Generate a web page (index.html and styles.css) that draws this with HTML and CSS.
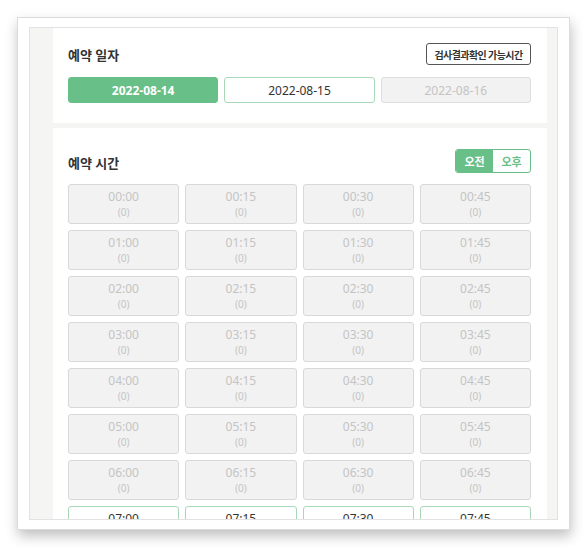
FILE: index.html
```html
<!DOCTYPE html>
<html lang="ko">
<head>
    <meta charset="UTF-8">
    <title>예약</title>
    <link rel="stylesheet" href="styles.css">
</head>
<body>
    <div class="frame">
        <div class="shot">
            <div class="card card-date">
                <div class="card-head">
                    <h3>예약 일자</h3>
                    <button class="btn-outline">검사결과확인 가능시간</button>
                </div>
                <div class="dates">
                    <button class="date active">2022-08-14</button>
                    <button class="date open">2022-08-15</button>
                    <button class="date closed">2022-08-16</button>
                </div>
            </div>

            <div class="card card-time">
                <div class="card-head">
                    <h3>예약 시간</h3>
                    <div class="toggle">
                        <button class="on">오전</button>
                        <button>오후</button>
                    </div>
                </div>
                <div class="times">
                    <!-- 00시 ~ 06시 : 마감 -->
                    <div class="slot off"><b>00:00</b><span>(0)</span></div>
                    <div class="slot off"><b>00:15</b><span>(0)</span></div>
                    <div class="slot off"><b>00:30</b><span>(0)</span></div>
                    <div class="slot off"><b>00:45</b><span>(0)</span></div>
                    <div class="slot off"><b>01:00</b><span>(0)</span></div>
                    <div class="slot off"><b>01:15</b><span>(0)</span></div>
                    <div class="slot off"><b>01:30</b><span>(0)</span></div>
                    <div class="slot off"><b>01:45</b><span>(0)</span></div>
                    <div class="slot off"><b>02:00</b><span>(0)</span></div>
                    <div class="slot off"><b>02:15</b><span>(0)</span></div>
                    <div class="slot off"><b>02:30</b><span>(0)</span></div>
                    <div class="slot off"><b>02:45</b><span>(0)</span></div>
                    <div class="slot off"><b>03:00</b><span>(0)</span></div>
                    <div class="slot off"><b>03:15</b><span>(0)</span></div>
                    <div class="slot off"><b>03:30</b><span>(0)</span></div>
                    <div class="slot off"><b>03:45</b><span>(0)</span></div>
                    <div class="slot off"><b>04:00</b><span>(0)</span></div>
                    <div class="slot off"><b>04:15</b><span>(0)</span></div>
                    <div class="slot off"><b>04:30</b><span>(0)</span></div>
                    <div class="slot off"><b>04:45</b><span>(0)</span></div>
                    <div class="slot off"><b>05:00</b><span>(0)</span></div>
                    <div class="slot off"><b>05:15</b><span>(0)</span></div>
                    <div class="slot off"><b>05:30</b><span>(0)</span></div>
                    <div class="slot off"><b>05:45</b><span>(0)</span></div>
                    <div class="slot off"><b>06:00</b><span>(0)</span></div>
                    <div class="slot off"><b>06:15</b><span>(0)</span></div>
                    <div class="slot off"><b>06:30</b><span>(0)</span></div>
                    <div class="slot off"><b>06:45</b><span>(0)</span></div>
                    <!-- 07시부터 예약 가능 -->
                    <div class="slot"><b>07:00</b><span>(0)</span></div>
                    <div class="slot"><b>07:15</b><span>(0)</span></div>
                    <div class="slot"><b>07:30</b><span>(0)</span></div>
                    <div class="slot"><b>07:45</b><span>(0)</span></div>
                </div>
            </div>
        </div>
    </div>
</body>
</html>
```

FILE: styles.css
```css
* {
    box-sizing: border-box;
    margin: 0;
    padding: 0;
}

body {
    background: #fff;
    padding: 17px;
    font-family: "Noto Sans", "Noto Sans CJK KR", sans-serif;
    color: #333;
}

button {
    font: inherit;
    background: transparent;
    border: none;
    color: inherit;
    cursor: pointer;
}

.frame {
    width: 553px;
    height: 513px;
    padding: 9px 11px 11px 11px;
    background: #fff;
    border: 1px solid #dcdcdc;
    box-shadow: 1px 6px 12px rgba(0, 0, 0, 0.25);
}

.shot {
    height: 493px;
    overflow: hidden;
    background: #f5f5f3;
    border: 1px solid #e2e2e2;
    padding: 0 10px 0 23px;
    display: flex;
    flex-direction: column;
    gap: 5px;
}

.card {
    background: #fff;
    padding: 0 16px 0 15px;
}

.card-date {
    padding-top: 15px;
    padding-bottom: 20px;
}

.card-time {
    padding-top: 21px;
}

.card-head {
    display: flex;
    justify-content: space-between;
    align-items: center;
}

.card-head h3 {
    font-size: 13px;
    font-weight: 700;
    color: #333;
}

.card-date .card-head {
    height: 22px;
}

.card-time .card-head {
    height: 24px;
}

.card-time .card-head h3 {
    padding-top: 3px;
}

.btn-outline {
    height: 22px;
    width: 105px;
    border: 1px solid #555;
    border-radius: 3px;
    font-size: 10px;
    letter-spacing: -0.6px;
    font-weight: 700;
    color: #333;
}

.dates {
    display: flex;
    gap: 6px;
    margin-top: 12px;
}

.date {
    flex: 1;
    height: 26px;
    border-radius: 3px;
    font-size: 12px;
    border: 1px solid transparent;
}

.date.active {
    background: #68bf88;
    border-color: #68bf88;
    color: #fff;
    font-weight: 700;
}

.date.open {
    background: #fff;
    border-color: #a9d8b8;
    color: #333;
}

.date.closed {
    background: #f2f2f2;
    border-color: #dedede;
    color: #c4c4c4;
}

.toggle {
    display: flex;
    width: 76px;
    height: 24px;
    border: 1px solid #68bf88;
    border-radius: 3px;
    overflow: hidden;
}

.toggle button {
    flex: 1;
    font-size: 11px;
    font-weight: 700;
    color: #68bf88;
}

.toggle button.on {
    background: #68bf88;
    color: #fff;
}

.times {
    display: grid;
    grid-template-columns: repeat(4, 1fr);
    gap: 6px;
    margin-top: 11px;
}

.slot {
    height: 40px;
    border: 1px solid #a9d8b8;
    border-radius: 3px;
    background: #fff;
    display: flex;
    flex-direction: column;
    align-items: center;
    justify-content: center;
    color: #333;
}

.slot b {
    font-size: 12px;
    font-weight: 400;
    line-height: 16px;
}

.slot span {
    font-size: 10px;
    line-height: 14px;
}

.slot.off {
    background: #f2f2f2;
    border-color: #d9d9d9;
    color: #c4c4c4;
}
```
